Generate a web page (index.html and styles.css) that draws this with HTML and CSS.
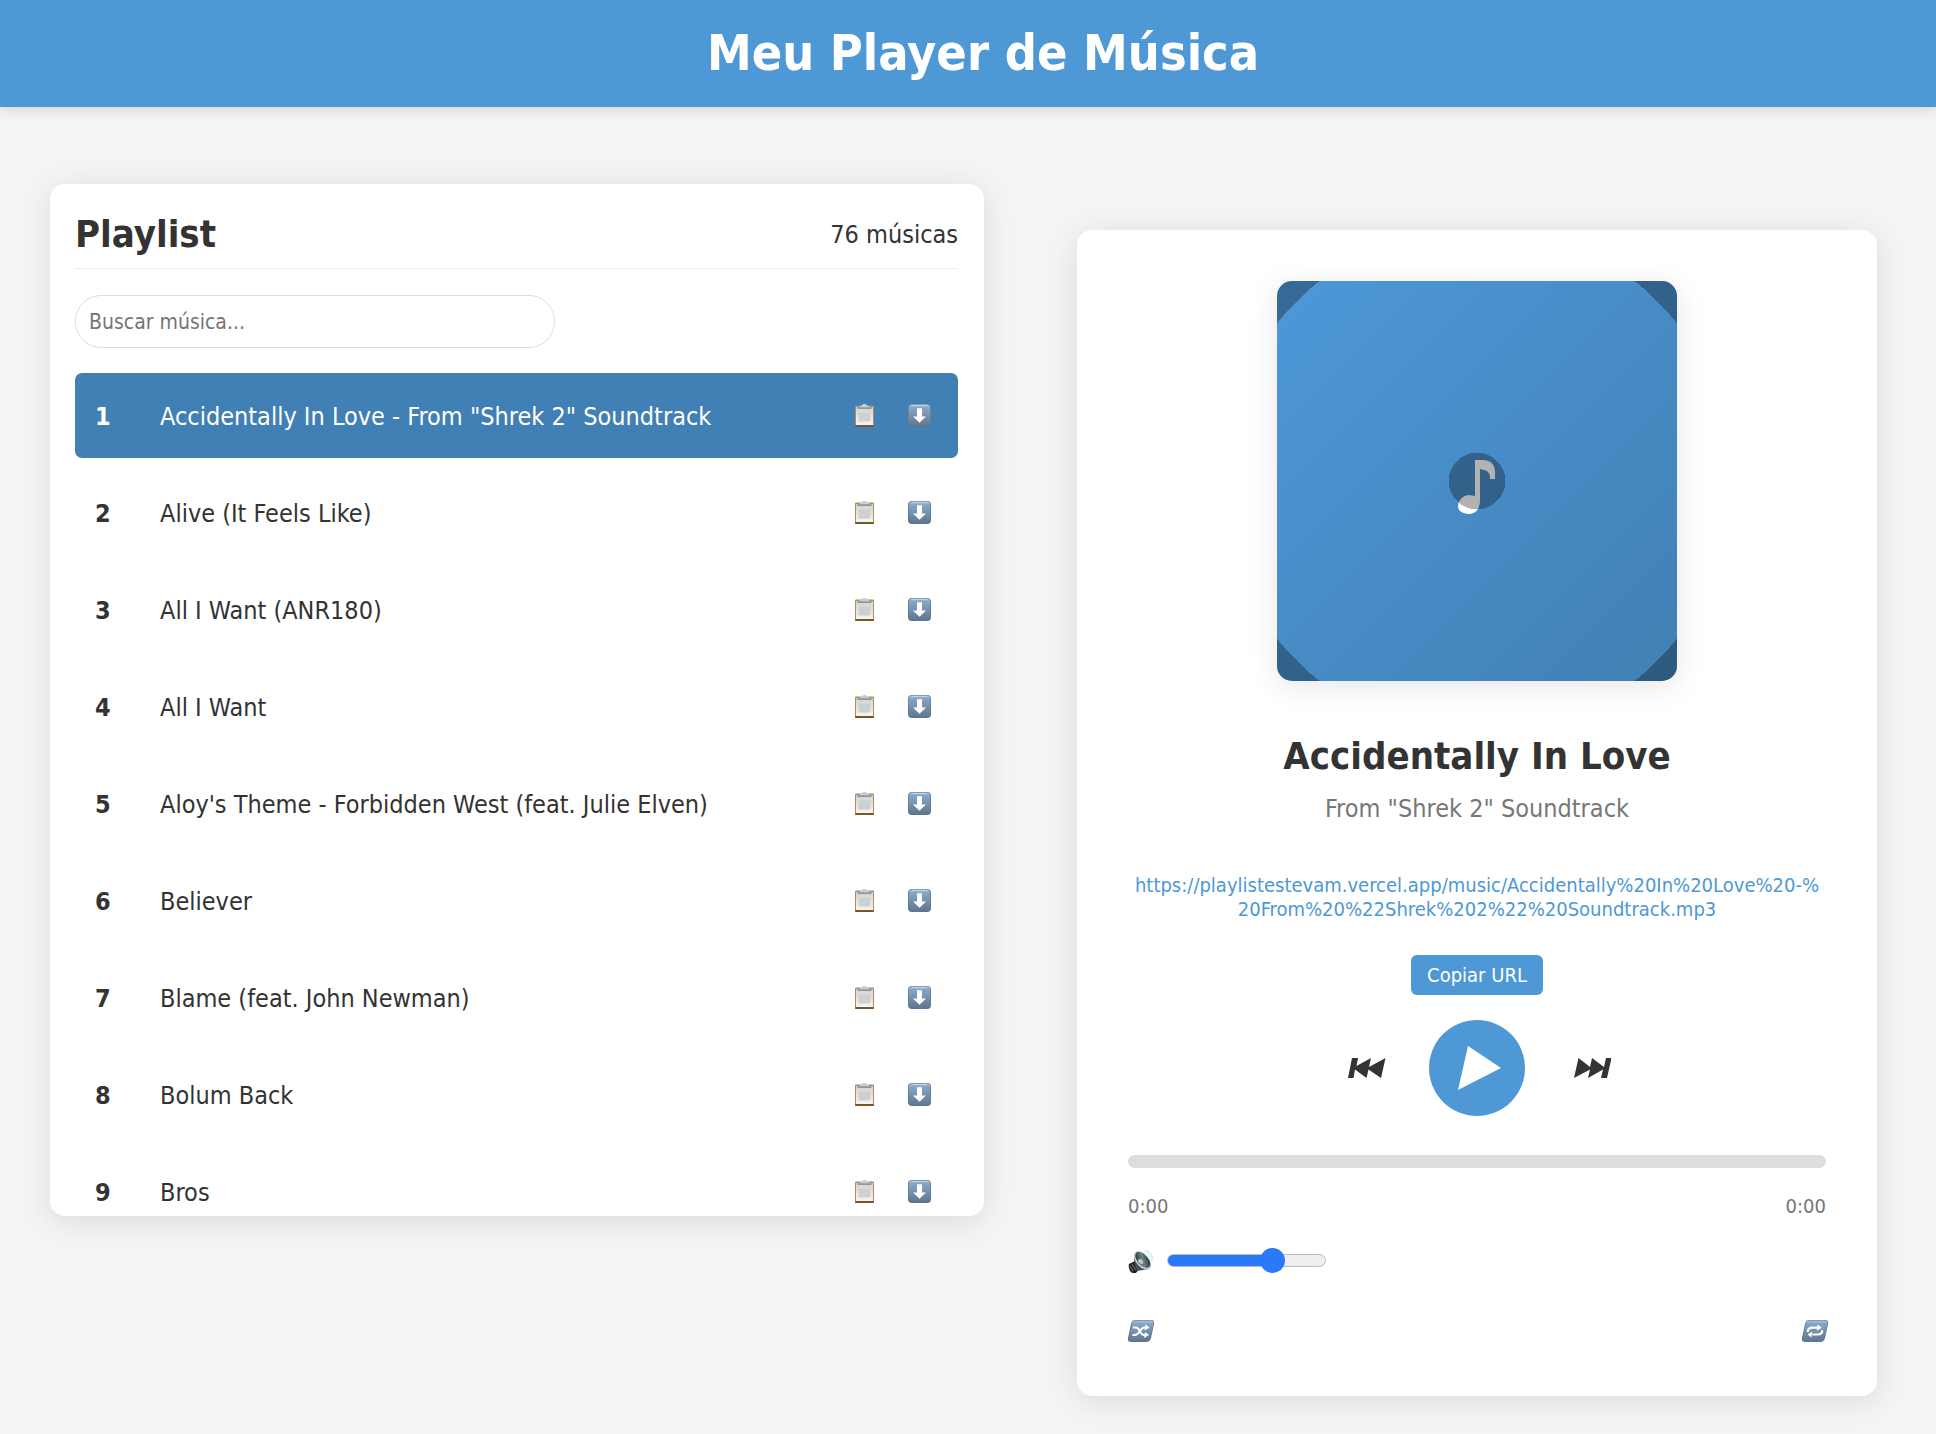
FILE: index.html
```html
<!DOCTYPE html>
<html lang="pt-BR">
<head>
<meta charset="utf-8">
<meta name="viewport" content="width=device-width, initial-scale=1">
<title>Meu Player de Música</title>
<link rel="stylesheet" href="styles.css">
</head>
<body>
<svg class="sprite" aria-hidden="true">
  <defs>
    <linearGradient id="steel" x1="0" y1="0" x2="0" y2="1">
      <stop offset="0" stop-color="#a9c4dc"/><stop offset=".14" stop-color="#86a6c4"/><stop offset="1" stop-color="#60768f"/>
    </linearGradient>
    <linearGradient id="paper" x1="0" y1="0" x2="0" y2="1">
      <stop offset="0" stop-color="#d2d2d2"/><stop offset="1" stop-color="#f4f4f4"/>
    </linearGradient>
    <linearGradient id="cone" x1="0" y1="0" x2="1" y2="1">
      <stop offset="0" stop-color="#16191b"/><stop offset=".5" stop-color="#6f8589"/><stop offset="1" stop-color="#15191b"/>
    </linearGradient>
    <symbol id="clipboard" viewBox="0 0 23 23">
      <rect x="2" y="1.500" width="19" height="21.500" rx="1" fill="#b08d5e"/>
      <rect x="2" y="21" width="19" height="2" rx="1" fill="#7c5527"/>
      <rect x="3" y="3" width="17" height="18" fill="url(#paper)"/>
      <path d="M5.500 8.500h12v8l-2 1h-10z" fill="#cfcfcf"/>
      <path d="M4.500 2.300h14V5h-14z" fill="#929698"/>
      <path d="M6.500 2.300 9.500 1.300a2 1.800 0 0 1 4 0l3 1v1h-10z" fill="#c8cfd2"/>
    </symbol>
    <symbol id="download" viewBox="0 0 23 23">
      <rect width="23" height="23" rx="4" fill="#5d738b"/>
      <rect x=".6" y=".6" width="21.800" height="21.600" rx="3.600" fill="url(#steel)"/>
      <path d="M4 1.500h15" stroke="#bdd5e8" stroke-width="1"/>
      <path d="M9 4.200h5v8.300h4L11.500 18.800 5 12.500h4z" fill="#fff"/>
    </symbol>
    <symbol id="shuffle" viewBox="0 0 26 22">
      <path d="M7 0h16q4 0 3 4l-3 14q-1 4-5 4H3q-4 0-3-4L3 4q1-4 4-4z" fill="#5d738b"/>
      <path d="M7 .6h16q3 0 2.400 3.400l-3 13.700q-1 3.600-4.400 3.600H3.300q-3.200 0-2.500-3.300l3-14Q4.500.6 7 .6z" fill="url(#steel)"/>
      <path d="M5 7.500h3c4 0 3.500 7.500 8 7.500h2M4.500 15H7c4.500 0 5-7.500 9.500-7.500h2" fill="none" stroke="#fff" stroke-width="2"/>
      <path d="m17.500 4.500 4 3-5 3zM17 12l4 3-5 3z" fill="#fff"/>
    </symbol>
    <symbol id="repeat" viewBox="0 0 26 22">
      <path d="M7 0h16q4 0 3 4l-3 14q-1 4-5 4H3q-4 0-3-4L3 4q1-4 4-4z" fill="#5d738b"/>
      <path d="M7 .6h16q3 0 2.400 3.400l-3 13.700q-1 3.600-4.400 3.600H3.300q-3.200 0-2.500-3.300l3-14Q4.500.6 7 .6z" fill="url(#steel)"/>
      <path d="M5.800 12c0-3 2-4.300 5-4.300h5M20.300 10.200c0 3-2 4.300-5 4.300h-5" fill="none" stroke="#fff" stroke-width="2.200"/>
      <path d="m15.800 4.600 4 3.100-5 3.100zM10.300 11.400l-1 6.200-3.700-3.100z" fill="#fff"/>
    </symbol>
    <symbol id="volume" viewBox="0 0 26 24">
      <path d="M1 15 7 12l5 7-4 5q-4 1-6-2-2-4-1-7z" fill="#202224"/>
      <path d="m4 15 4 6M2 17l3 5" stroke="#6c7073" stroke-width="1.200"/>
      <path d="M6 12 7 4l14 16-12 2z" fill="#4c5054"/>
      <ellipse cx="14.500" cy="11.500" rx="6.300" ry="11" transform="rotate(-42 14.500 11.500)" fill="#c9cdd0"/>
      <ellipse cx="14.800" cy="10.900" rx="5.200" ry="9.700" transform="rotate(-42 14.800 10.900)" fill="url(#cone)"/>
      <ellipse cx="12.600" cy="12.400" rx="2" ry="3" transform="rotate(-42 12.600 12.400)" fill="#b9c8ce"/>
      <path d="M16 2.500q5 1.500 8 9.500M17 .6q6 2 8.500 10.400" fill="none" stroke="#cdeff4" stroke-width="1.200"/>
    </symbol>
  </defs>
</svg>

<header class="topbar"><h1 class="topbar-title">Meu Player de Música</h1></header>

<main class="layout">
  <section class="playlist">
    <div class="playlist-head">
      <h2 class="heading">Playlist</h2>
      <span>76 músicas</span>
    </div>
    <input class="search" type="text" placeholder="Buscar música..." aria-label="Buscar música">
    <ul class="songs">
      <li class="song song-active"><span class="song-number">1</span><span class="song-title">Accidentally In Love - From "Shrek 2" Soundtrack</span><button class="song-action" aria-label="Copiar"><svg class="icon"><use href="#clipboard"/></svg></button><button class="song-action" aria-label="Baixar"><svg class="icon"><use href="#download"/></svg></button></li>
      <li class="song"><span class="song-number">2</span><span class="song-title">Alive (It Feels Like)</span><button class="song-action" aria-label="Copiar"><svg class="icon"><use href="#clipboard"/></svg></button><button class="song-action" aria-label="Baixar"><svg class="icon"><use href="#download"/></svg></button></li>
      <li class="song"><span class="song-number">3</span><span class="song-title">All I Want (ANR180)</span><button class="song-action" aria-label="Copiar"><svg class="icon"><use href="#clipboard"/></svg></button><button class="song-action" aria-label="Baixar"><svg class="icon"><use href="#download"/></svg></button></li>
      <li class="song"><span class="song-number">4</span><span class="song-title">All I Want</span><button class="song-action" aria-label="Copiar"><svg class="icon"><use href="#clipboard"/></svg></button><button class="song-action" aria-label="Baixar"><svg class="icon"><use href="#download"/></svg></button></li>
      <li class="song"><span class="song-number">5</span><span class="song-title">Aloy's Theme - Forbidden West (feat. Julie Elven)</span><button class="song-action" aria-label="Copiar"><svg class="icon"><use href="#clipboard"/></svg></button><button class="song-action" aria-label="Baixar"><svg class="icon"><use href="#download"/></svg></button></li>
      <li class="song"><span class="song-number">6</span><span class="song-title">Believer</span><button class="song-action" aria-label="Copiar"><svg class="icon"><use href="#clipboard"/></svg></button><button class="song-action" aria-label="Baixar"><svg class="icon"><use href="#download"/></svg></button></li>
      <li class="song"><span class="song-number">7</span><span class="song-title">Blame (feat. John Newman)</span><button class="song-action" aria-label="Copiar"><svg class="icon"><use href="#clipboard"/></svg></button><button class="song-action" aria-label="Baixar"><svg class="icon"><use href="#download"/></svg></button></li>
      <li class="song"><span class="song-number">8</span><span class="song-title">Bolum Back</span><button class="song-action" aria-label="Copiar"><svg class="icon"><use href="#clipboard"/></svg></button><button class="song-action" aria-label="Baixar"><svg class="icon"><use href="#download"/></svg></button></li>
      <li class="song"><span class="song-number">9</span><span class="song-title">Bros</span><button class="song-action" aria-label="Copiar"><svg class="icon"><use href="#clipboard"/></svg></button><button class="song-action" aria-label="Baixar"><svg class="icon"><use href="#download"/></svg></button></li>
    </ul>
  </section>

  <section class="player">
    <div class="cover">
      <svg class="note" viewBox="0 0 42 56" aria-hidden="true"><path d="M19 1h9q11 1 11 13v6h-5v-2q0-7-10-8v28q1 17-12 17Q2 54 2 47 3 37 13 36l6 1z" fill="#fff"/></svg>
    </div>
    <h2 class="heading">Accidentally In Love</h2>
    <p class="artist">From "Shrek 2" Soundtrack</p>
    <a class="url" href="https://playlistestevam.vercel.app/music/Accidentally%20In%20Love%20-%20From%20%22Shrek%202%22%20Soundtrack.mp3">https://playlistestevam.vercel.app/music/Accidentally%20In%20Love%20-%<wbr>20From%20%22Shrek%202%22%20Soundtrack.mp3</a>
    <button class="copy">Copiar URL</button>
    <div class="controls">
      <button class="skip" aria-label="Anterior"><svg class="skip-icon" viewBox="-5 0 44 20"><path d="M4 0h6L8.500 8 23 0l-2 9L37.500 0 33 20 20.500 11.500 18.500 20 7 11.500 5.500 20H0z" fill="#333"/></svg></button>
      <button class="play" aria-label="Tocar"><svg class="play-icon" viewBox="-5 0 48 44"><path d="M10 0 43 22 0 44z" fill="#fff"/></svg></button>
      <button class="skip" aria-label="Próxima"><svg class="skip-icon" viewBox="-7 0 44 20"><path d="M4.500 0 16 9l2-9 12 9 2-9h5.500l-4.500 20h-6L29 11.500 14 20l2-8.500L0 20z" fill="#333"/></svg></button>
    </div>
    <div class="progress"></div>
    <div class="row times"><span>0:00</span><span>0:00</span></div>
    <div class="volume">
      <svg class="wide-icon" aria-hidden="true"><use href="#volume"/></svg>
      <input class="slider" type="range" min="0" max="100" value="70" aria-label="Volume">
    </div>
    <div class="row modes">
      <button class="mode" aria-label="Aleatório"><svg class="wide-icon"><use href="#shuffle"/></svg></button>
      <button class="mode" aria-label="Repetir"><svg class="wide-icon"><use href="#repeat"/></svg></button>
    </div>
  </section>
</main>
</body>
</html>
```

FILE: styles.css
```css
* { box-sizing: border-box; margin: 0; padding: 0; }

body {
  background: #f4f4f4;
  color: #333;
  font-family: "DejaVu Sans Condensed", "DejaVu Sans", sans-serif;
  font-size: 25px;
  line-height: 32px;
}

button { border: 0; background: none; font: inherit; color: inherit; cursor: pointer; }

.sprite { display: block; width: 0; height: 0; position: absolute; }

.topbar {
  background: #4e98d6;
  color: #fff;
  padding: 20px 20px 20px 50px;
  text-align: center;
  box-shadow: 0 2px 12px rgba(0, 0, 0, 0.15);
}
.topbar-title { font-size: 50px; line-height: 67px; }

.layout {
  display: grid;
  grid-template-columns: minmax(0, 934fr) minmax(0, 818fr);
  gap: 84px;
  align-items: start;
  padding: 77px 50px 38px;
}

.playlist, .player {
  background: #fff;
  border-radius: 15px;
  box-shadow: 0 5px 30px rgba(0, 0, 0, 0.1);
}

.playlist {
  max-height: 72vh;
  padding: 25px 26px 25px 25px;
  overflow-y: auto;
  scrollbar-width: none;
}
.playlist-head {
  display: flex;
  justify-content: space-between;
  align-items: center;
  padding: 1px 0 9px;
  border-bottom: 1px solid #eee;
}
.heading { font-size: 38px; line-height: 49px; }

.search {
  display: block;
  width: 480px;
  max-width: 100%;
  height: 53px;
  margin: 26px 0 25px;
  padding: 0 13px;
  border: 1px solid #ddd;
  border-radius: 26px;
  font: inherit;
  font-size: 21px;
}
.search::placeholder { color: #757575; }

.songs { display: grid; gap: 12px; list-style: none; }
.song {
  display: flex;
  align-items: center;
  height: 85px;
  padding: 0 20px;
  border-radius: 7px;
}
.song-active { background: #4080b4; color: #fff; }
.song-number, .song-title { padding-top: 3px; }
.song-number { width: 65px; font-weight: bold; }
.song-title { flex: 1; }
.song-action { display: grid; place-items: center; width: 37px; height: 37px; margin-left: 18px; }
.icon { display: block; width: 23px; height: 23px; }

.player {
  display: flex;
  flex-direction: column;
  align-items: center;
  width: 100%;
  max-width: 800px;
  margin-top: 46px;
  padding: 51px 51px 41px;
  justify-self: center;
}
.cover {
  position: relative;
  display: grid;
  place-items: center;
  width: 400px;
  height: 400px;
  max-width: 100%;
  margin-bottom: 51px;
  border-radius: 15px;
  overflow: hidden;
  background: linear-gradient(135deg, #4e98d8, #4080b4);
  box-shadow: 0 5px 30px rgba(0, 0, 0, 0.1);
}
.cover::after {
  content: "";
  position: absolute;
  inset: 0;
  background: radial-gradient(circle, rgba(0, 0, 0, 0.3) 10%, transparent 10%, transparent 90%, rgba(0, 0, 0, 0.3) 90%);
}
.note { width: 42px; height: 56px; margin-top: 12px; }
.artist { margin-top: 12px; color: #777; }
.url {
  margin-top: 48px;
  color: #4e98d6;
  font-size: 20px;
  line-height: 24px;
  text-align: center;
  text-decoration: none;
}
.copy {
  height: 40px;
  margin: 34px 0 25px;
  padding: 0 16px;
  border-radius: 6px;
  background: #4e98d6;
  color: #fff;
  font-size: 20px;
}
.controls { display: flex; align-items: center; gap: 38px; }
.skip { display: grid; place-items: center; width: 52px; height: 52px; }
.skip-icon { width: 44px; height: 20px; }
.play {
  display: grid;
  place-items: center;
  width: 96px;
  height: 96px;
  border-radius: 50%;
  background: #4e98d6;
}
.play-icon { width: 48px; height: 44px; }
.progress {
  align-self: stretch;
  height: 13px;
  margin-top: 39px;
  border-radius: 7px;
  background: #ddd;
}
.row { align-self: stretch; display: flex; justify-content: space-between; }
.times { margin-top: 22px; color: #777; font-size: 20px; }
.volume { align-self: flex-start; display: flex; align-items: center; gap: 13px; margin-top: 26px; }
.wide-icon { display: block; width: 26px; height: 24px; }

.slider {
  appearance: none;
  width: 159px;
  height: 25px;
  background: transparent;
}
.slider::-webkit-slider-runnable-track {
  height: 13px;
  border: 1px solid #bbb;
  border-radius: 7px;
  background: linear-gradient(to right, #2a79f8 66%, #eee 66%);
}
.slider::-webkit-slider-thumb {
  appearance: none;
  width: 25px;
  height: 25px;
  margin-top: -7px;
  border-radius: 50%;
  background: #2a79f8;
}
.modes { margin-top: 34px; margin-right: -2px; align-self: stretch; }
.mode { display: grid; place-items: center; height: 48px; }
```
